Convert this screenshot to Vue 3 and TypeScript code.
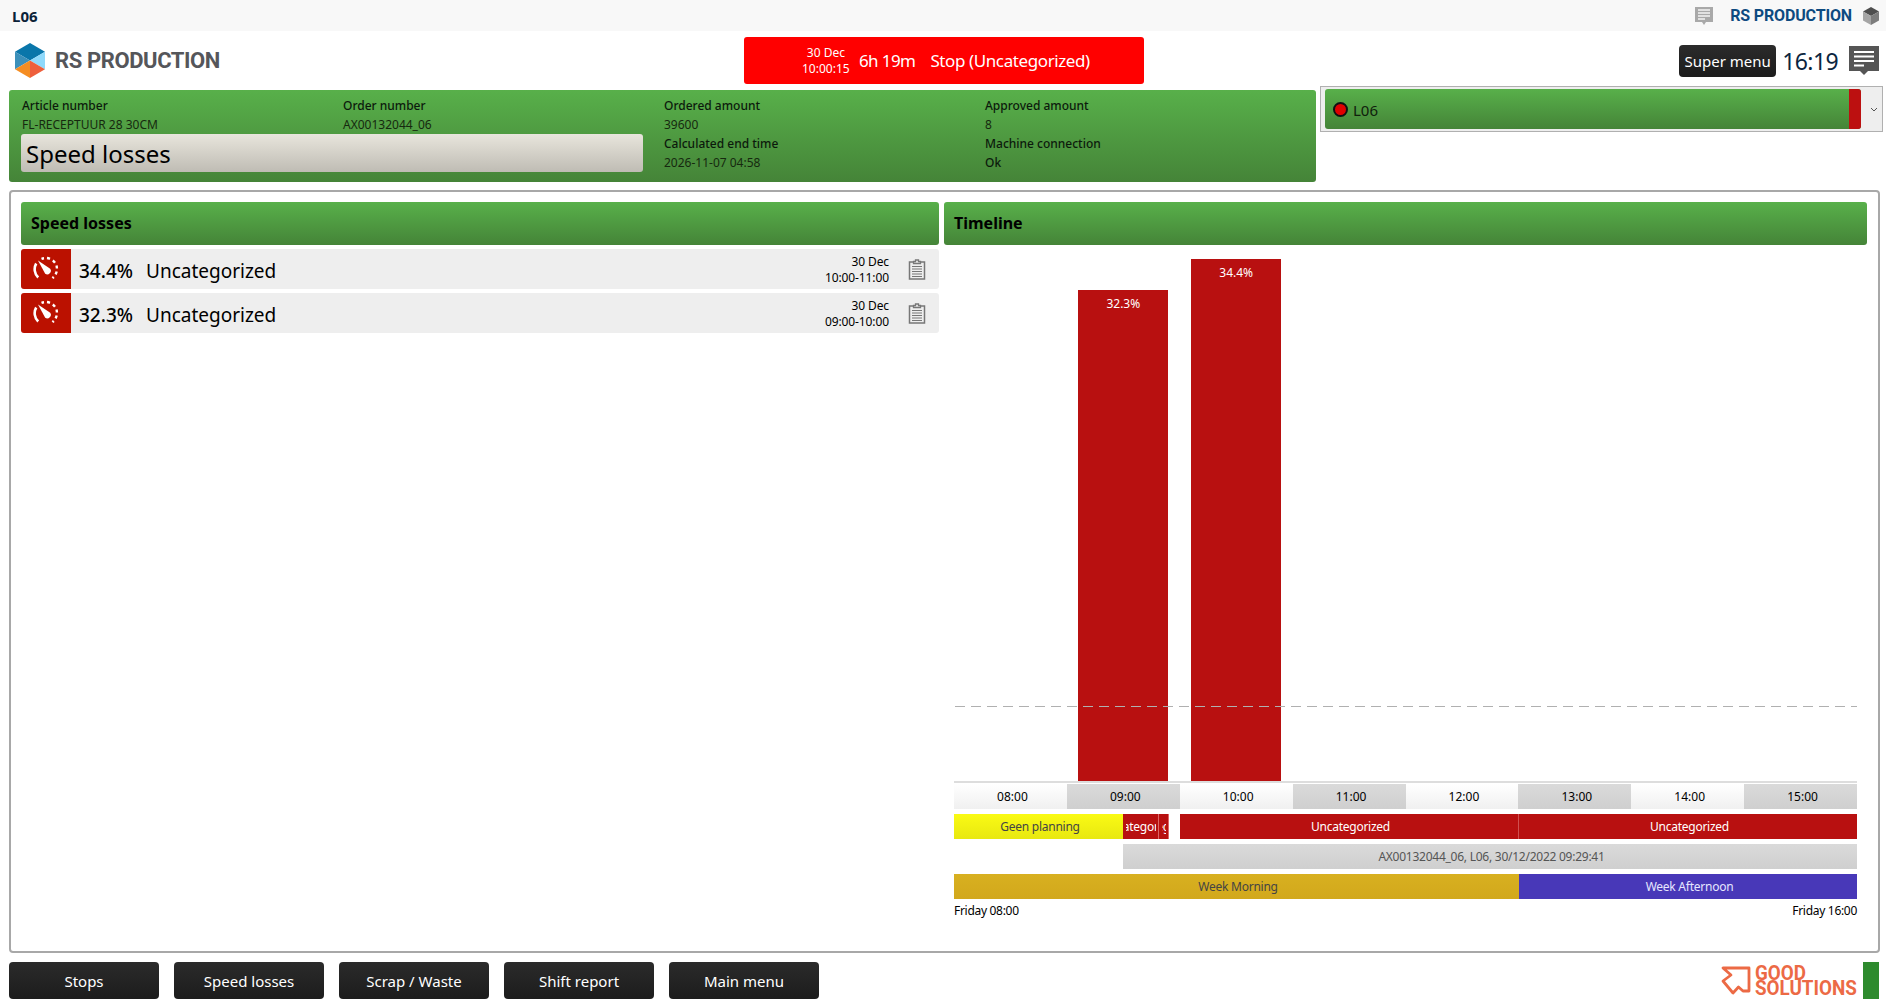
<template>
  <div class="page">
    <div class="topbar">
      <span class="station">L06</span>
      <div class="topbar-right">
        <svg class="top-chat" viewBox="0 0 18 18">
          <path d="M0 0h18v15h-7l-2 3-2-3H0z" fill="#a9a9a9" />
          <path d="M3 3h12M3 6h12M3 9h12M3 12h7" stroke="#f4f4f4" stroke-width="1.5" />
        </svg>
        <span class="brand-small">RS PRODUCTION</span>
        <svg class="cube" viewBox="0 0 16 18">
          <path d="M8 0l8 4.500-8 4.500-8-4.500z" fill="#4e4e4e" />
          <path d="M0 4.500l8 4.500v9l-8-4.500z" fill="#a5a5a5" />
          <path d="M16 4.500l-8 4.500v9l8-4.500z" fill="#7d7d7d" />
        </svg>
      </div>
    </div>

    <div class="header">
      <div class="logo">
        <svg class="hex" viewBox="0 0 30 35">
          <path d="M15 0l15 8.750L15 17.500 0 8.750z" fill="#0a76aa" />
          <path d="M0 8.750l15 8.750L0 26.250z" fill="#3c90ba" />
          <path d="M30 8.750L15 17.500l15 8.750z" fill="#8fd9fb" />
          <path d="M15 17.500L0 26.250 15 35z" fill="#f58d22" />
          <path d="M15 17.500l15 8.750L15 35z" fill="#ee5f3c" />
        </svg>
        <span class="logo-text">RS PRODUCTION</span>
      </div>
      <div class="stop-banner">
        <div class="stop-date">30 Dec<br />10:00:15</div>
        <span class="stop-duration">6h 19m</span>
        <span class="stop-reason">Stop (Uncategorized)</span>
      </div>
      <div class="header-right">
        <button class="dark-btn super">Super menu</button>
        <span class="clock">16:19</span>
        <svg class="big-chat" viewBox="0 0 30 30">
          <path d="M0 0h30v25H19l-4 4-4-4H0z" fill="#555" />
          <path d="M5 6h20M5 10.500h20M5 15h20M5 19.500h10" stroke="#fff" stroke-width="2" />
        </svg>
      </div>
    </div>

    <div class="info-row">
      <div class="info-panel green">
        <div class="info-col">
          <div class="info-label">Article number</div>
          <div class="info-value">FL-RECEPTUUR 28 30CM</div>
        </div>
        <div class="info-col">
          <div class="info-label">Order number</div>
          <div class="info-value">AX00132044_06</div>
        </div>
        <div class="info-col">
          <div class="info-label">Ordered amount</div>
          <div class="info-value">39600</div>
        </div>
        <div class="info-col">
          <div class="info-label">Approved amount</div>
          <div class="info-value">8</div>
        </div>
        <div class="page-title">Speed losses</div>
        <div class="info-col">
          <div class="info-label">Calculated end time</div>
          <div class="info-value">2026-11-07 04:58</div>
        </div>
        <div class="info-col">
          <div class="info-label">Machine connection</div>
          <div class="info-value strong">Ok</div>
        </div>
      </div>
      <div class="machine">
        <div class="machine-bar green">
          <span class="machine-dot"></span>
          <span class="machine-name">L06</span>
          <span class="machine-end"></span>
        </div>
        <svg class="chevron" viewBox="0 0 8 5">
          <path d="M1 1l3 3 3-3" fill="none" stroke="#555" stroke-width="1" />
        </svg>
      </div>
    </div>

    <div class="frame">
      <section class="losses">
        <h2 class="section-title green">Speed losses</h2>
        <div v-for="row in lossRows" :key="row.time" class="loss-row">
          <div class="loss-icon">
            <svg viewBox="0 0 26 26" width="26" height="26">
              <path d="M5.200 21.500A11.500 11.500 0 0 1 3.200 7.500" fill="none" stroke="#fff" stroke-width="2.600" />
              <path d="M8.500 2.800a11.500 11.500 0 0 1 2.500-.6M14 2a11.500 11.500 0 0 1 3 .8M19.800 4.500a11.500 11.500 0 0 1 2.200 2.200M23.500 9.500a11.500 11.500 0 0 1 .4 3M23.700 15.500a11.500 11.500 0 0 1-1.100 2.800M20.800 21l-1.300 1.200" fill="none" stroke="#fff" stroke-width="2.400" />
              <path d="M5 4.500l12.200 8.200a3.600 3.600 0 0 1-5 5z" fill="#fff" />
            </svg>
          </div>
          <span class="loss-pct">{{ row.pct }}</span>
          <span class="loss-name">Uncategorized</span>
          <div class="loss-time">30 Dec<br />{{ row.time }}</div>
          <svg class="clipboard" viewBox="0 0 18 21">
            <path d="M5.500 3H1.500v17h15V3h-4" fill="none" stroke="#777" stroke-width="1.500" />
            <path d="M5.500 4.500V2.500h2V1h3v1.500h2v2z" fill="none" stroke="#777" stroke-width="1.300" />
            <path d="M4 7.500h10M4 10h10M4 12.500h10M4 15h10M4 17.500h10" stroke="#777" stroke-width="1" />
          </svg>
        </div>
      </section>

      <section class="timeline">
        <h2 class="section-title green">Timeline</h2>
        <div class="chart">
          <div class="plot">
            <div v-for="slot in slots" :key="slot.hour" class="slot">
              <div v-if="slot.value" class="bar" :style="{ height: slot.height + 'px' }">{{ slot.value }}</div>
            </div>
            <div class="target-line"></div>
          </div>
          <div class="hours">
            <div v-for="(slot, i) in slots" :key="slot.hour" class="hour" :class="{ shaded: i % 2 === 1 }">{{ slot.hour }}</div>
          </div>
          <div class="track">
            <div
              v-for="seg in stateSegments"
              :key="seg.from"
              class="seg"
              :class="seg.kind"
              :style="{ width: seg.width + 'px' }"
            >
              <span v-if="seg.kind.includes('clip')" class="seg-clip"><span>{{ seg.label }}</span></span>
              <template v-else>{{ seg.label }}</template>
            </div>
          </div>
          <div class="track">
            <div class="seg blank" style="width: 169px"></div>
            <div class="seg order">AX00132044_06, L06, 30/12/2022 09:29:41</div>
          </div>
          <div class="track">
            <div class="seg gold" style="width: 565px">Week Morning</div>
            <div class="seg purple">Week Afternoon</div>
          </div>
          <div class="range">
            <span>Friday 08:00</span>
            <span>Friday 16:00</span>
          </div>
        </div>
      </section>
    </div>

    <div class="footer">
      <button v-for="item in menu" :key="item" class="dark-btn nav">{{ item }}</button>
      <div class="footer-right">
        <div class="good">
          <svg class="good-mark" viewBox="0 0 30 29">
            <path d="M2 2h26v23h-6l-4.500-4-5.500 6L2 15l8-6z" fill="none" stroke="#ec6a45" stroke-width="2.800" stroke-linejoin="round" />
          </svg>
          <div class="good-text">GOOD<br />SOLUTIONS</div>
        </div>
        <span class="status-block"></span>
      </div>
    </div>
  </div>
</template>

<script setup lang="ts">
interface Slot {
  hour: string
  value?: string
  height?: number
}

interface Segment {
  from: string
  label: string
  kind: string
  width: number
}

const lossRows = [
  { pct: '34.4%', time: '10:00-11:00' },
  { pct: '32.3%', time: '09:00-10:00' }
]

const slots: Slot[] = [
  { hour: '08:00' },
  { hour: '09:00', value: '32.3%', height: 491 },
  { hour: '10:00', value: '34.4%', height: 522 },
  { hour: '11:00' },
  { hour: '12:00' },
  { hour: '13:00' },
  { hour: '14:00' },
  { hour: '15:00' }
]

const stateSegments: Segment[] = [
  { from: '08:00', label: 'Geen planning', kind: 'yellow', width: 169 },
  { from: '09:29', label: 'Uncategorized', kind: 'red clip', width: 36 },
  { from: '09:43', label: 'Uncategorized', kind: 'red clip', width: 10 },
  { from: '09:47', label: '', kind: 'blank', width: 11 },
  { from: '10:00', label: 'Uncategorized', kind: 'red', width: 338 },
  { from: '13:00', label: 'Uncategorized', kind: 'red divided', width: 339 }
]

const menu = ['Stops', 'Speed losses', 'Scrap / Waste', 'Shift report', 'Main menu']
</script>

<style>
html,
body {
  margin: 0;
  background: #fff;
}
</style>

<style scoped>
.page {
  width: 1886px;
  height: 1007px;
  display: flex;
  flex-direction: column;
  overflow: hidden;
  font-family: "Noto Sans", "Open Sans", sans-serif;
  color: #000;
}

.green {
  background: linear-gradient(#58b04a, #458438);
}

.topbar {
  height: 31px;
  flex-shrink: 0;
  display: flex;
  align-items: center;
  justify-content: space-between;
  background: #f8f8f8;
  padding: 0 7px 0 12px;
}

.station {
  font-size: 15px;
  font-weight: 700;
  color: #0b2238;
}

.topbar-right {
  display: flex;
  align-items: center;
}

.top-chat {
  width: 18px;
  height: 18px;
  margin-right: 17px;
}

.brand-small {
  font-family: Roboto, sans-serif;
  font-size: 16px;
  letter-spacing: -0.15px;
  font-weight: 700;
  color: #0d4a80;
  margin-right: 11px;
}

.cube {
  width: 16px;
  height: 18px;
}

.header {
  height: 55px;
  flex-shrink: 0;
  box-sizing: border-box;
  display: grid;
  grid-template-columns: 729px 400px 1fr;
  align-items: center;
  padding: 4px 7px 0 15px;
}

.logo {
  display: flex;
  align-items: center;
  gap: 10px;
}

.hex {
  width: 30px;
  height: 35px;
}

.logo-text {
  font-family: Roboto, sans-serif;
  font-size: 22px;
  letter-spacing: -0.4px;
  font-weight: 700;
  color: #55565a;
}

.stop-banner {
  height: 47px;
  display: flex;
  align-items: center;
  box-sizing: border-box;
  padding-left: 58px;
  background: #ff0000;
  border-radius: 3px;
  color: #fff;
}

.stop-date {
  font-size: 12px;
  line-height: 16px;
  text-align: right;
  width: 43px;
  flex-shrink: 0;
}

.stop-duration {
  font-size: 17px;
  letter-spacing: -0.6px;
  margin-left: 14px;
}

.stop-reason {
  font-size: 17px;
  letter-spacing: -0.4px;
  margin-left: 15px;
}

.header-right {
  display: flex;
  align-items: center;
  justify-content: flex-end;
}

.dark-btn {
  border: 0;
  border-radius: 4px;
  background: linear-gradient(#2b2b2b, #1c1c1c);
  color: #fff;
  font-family: inherit;
  padding: 0;
}

.super {
  width: 97px;
  height: 32px;
  font-size: 15px;
}

.clock {
  font-size: 23px;
  letter-spacing: -0.6px;
  color: #0a2540;
  margin: 0 11px 0 6px;
}

.big-chat {
  width: 30px;
  height: 30px;
}

.info-row {
  display: flex;
  flex-shrink: 0;
  padding-left: 9px;
  align-items: flex-start;
}

.info-panel {
  width: 1307px;
  height: 92px;
  margin-top: 4px;
  box-sizing: border-box;
  border-radius: 3px;
  padding: 6px 0 0 13px;
  display: grid;
  grid-template-columns: 321px 321px 321px 321px;
  grid-template-rows: 38px 38px;
}

.info-col {
  font-size: 12px;
  line-height: 19px;
}

.info-label {
  font-weight: 500;
  color: #0c1a0c;
}

.info-value {
  color: #16290f;
}

.info-value.strong {
  font-weight: 500;
  color: #0c1a0c;
}

.page-title {
  grid-column: 1 / span 2;
  width: 622px;
  height: 38px;
  margin: 0 0 0 -1px;
  box-sizing: border-box;
  padding-left: 5px;
  border-radius: 3px;
  background: linear-gradient(#e8e5dc, #bfbcb4);
  font-size: 24px;
  line-height: 40px;
}

.machine {
  width: 563px;
  height: 46px;
  margin-left: 4px;
  box-sizing: border-box;
  border: 1px solid #b0b0b0;
  background: #eee;
  display: flex;
  align-items: center;
  padding: 0 4px 0 4px;
}

.machine-bar {
  flex: 1;
  height: 40px;
  border-radius: 3px;
  display: flex;
  align-items: center;
  padding-left: 8px;
  overflow: hidden;
}

.machine-dot {
  width: 11px;
  height: 11px;
  border: 2px solid #111;
  border-radius: 50%;
  background: #e00000;
}

.machine-name {
  font-size: 15px;
  line-height: 24px;
  padding-top: 1px;
  margin-left: 5px;
  flex: 1;
  color: #10200c;
}

.machine-end {
  width: 12px;
  height: 100%;
  background: #bc1010;
}

.chevron {
  width: 8px;
  height: 5px;
  margin-left: 9px;
}

.frame {
  height: 763px;
  flex-shrink: 0;
  margin: 8px 6px 0 9px;
  box-sizing: border-box;
  border: 2px solid #a8a8a8;
  border-radius: 4px;
  padding: 10px 11px 0 10px;
  display: flex;
  gap: 5px;
}

.losses {
  width: 918px;
  flex-shrink: 0;
}

.timeline {
  flex: 1;
  min-width: 0;
}

.section-title {
  height: 43px;
  margin: 0 0 4px;
  border-radius: 3px;
  padding-left: 10px;
  font-size: 16px;
  line-height: 43px;
  font-weight: 700;
}

.loss-row {
  height: 40px;
  margin-bottom: 4px;
  display: flex;
  align-items: center;
  background: #eee;
  border-radius: 3px;
}

.loss-icon {
  width: 50px;
  height: 100%;
  display: flex;
  align-items: center;
  justify-content: center;
  background: #bb1100;
  border-radius: 3px 0 0 3px;
}

.loss-pct {
  font-size: 19px;
  font-weight: 500;
  margin-left: 8px;
  width: 67px;
  padding-top: 3px;
}

.loss-name {
  font-size: 19px;
  flex: 1;
  padding-top: 3px;
}

.loss-time {
  font-size: 12px;
  line-height: 16px;
  text-align: right;
  padding-top: 2px;
  letter-spacing: -0.1px;
}

.clipboard {
  width: 18px;
  height: 21px;
  margin: 0 13px 0 19px;
}

.chart {
  padding: 0 10px;
}

.plot {
  height: 532px;
  position: relative;
  display: flex;
  align-items: flex-end;
  border-bottom: 2px solid #ddd;
}

.slot {
  flex: 1;
  display: flex;
  justify-content: center;
}

.bar {
  width: 90px;
  box-sizing: border-box;
  padding-top: 5px;
  background: #b81010;
  color: #fff;
  font-size: 12px;
  text-align: center;
}

.target-line {
  position: absolute;
  left: 1px;
  right: 0;
  bottom: 74px;
  height: 1.500px;
  background: repeating-linear-gradient(90deg, #b0b0b0 0 10px, transparent 10px 16px);
}

.hours {
  display: flex;
  height: 25px;
  margin-top: 1px;
}

.hour {
  flex: 1;
  box-sizing: border-box;
  padding-left: 4px;
  font-size: 12px;
  line-height: 25px;
  text-align: center;
  background: linear-gradient(#fff, #f0f0f0);
}

.hour.shaded {
  background: linear-gradient(#dadada, #cfcfcf);
}

.track {
  display: flex;
  height: 25px;
  margin-top: 5px;
}

.seg {
  flex-shrink: 0;
  box-sizing: border-box;
  padding-left: 3px;
  font-size: 12px;
  letter-spacing: -0.25px;
  line-height: 25px;
  text-align: center;
  white-space: nowrap;
  overflow: hidden;
}

.seg.clip {
  padding-left: 0;
  border-right: 1px solid #d66;
}

.seg-clip {
  display: flex;
  justify-content: center;
  overflow: hidden;
  margin: 0 2px 0 3px;
}

.seg-clip span {
  flex-shrink: 0;
}

.divided {
  border-left: 1px solid #d05050;
}

.yellow {
  background: linear-gradient(#fafa14, #e8e810);
  color: #444;
}

.red {
  background: #b81010;
  color: #fff;
}

.order {
  flex: 1;
  background: linear-gradient(#dadada, #cfcfcf);
  color: #555;
}

.gold {
  background: linear-gradient(#d8b020, #d2a81c);
  color: #444;
}

.purple {
  flex: 1;
  background: #4838b8;
  color: #e6e6ff;
}

.range {
  display: flex;
  justify-content: space-between;
  font-size: 12px;
  letter-spacing: -0.3px;
  line-height: 16px;
  margin-top: 4px;
}

.footer {
  flex: 1;
  display: flex;
  align-items: flex-start;
  gap: 15px;
  padding: 9px 7px 0 9px;
}

.nav {
  width: 150px;
  height: 37px;
  font-size: 15px;
}

.footer-right {
  margin-left: auto;
  display: flex;
  align-items: center;
  gap: 8px;
}

.good {
  display: flex;
  align-items: center;
  gap: 4px;
  color: #ec6a45;
}

.good-mark {
  width: 30px;
  height: 29px;
}

.good-text {
  width: 100px;
  font-family: Roboto, sans-serif;
  font-weight: 700;
  font-size: 20px;
  line-height: 15px;
  white-space: nowrap;
  transform: scaleX(0.94);
  transform-origin: left center;
}

.status-block {
  width: 16px;
  height: 37px;
  background: #2e8b2e;
}
</style>
